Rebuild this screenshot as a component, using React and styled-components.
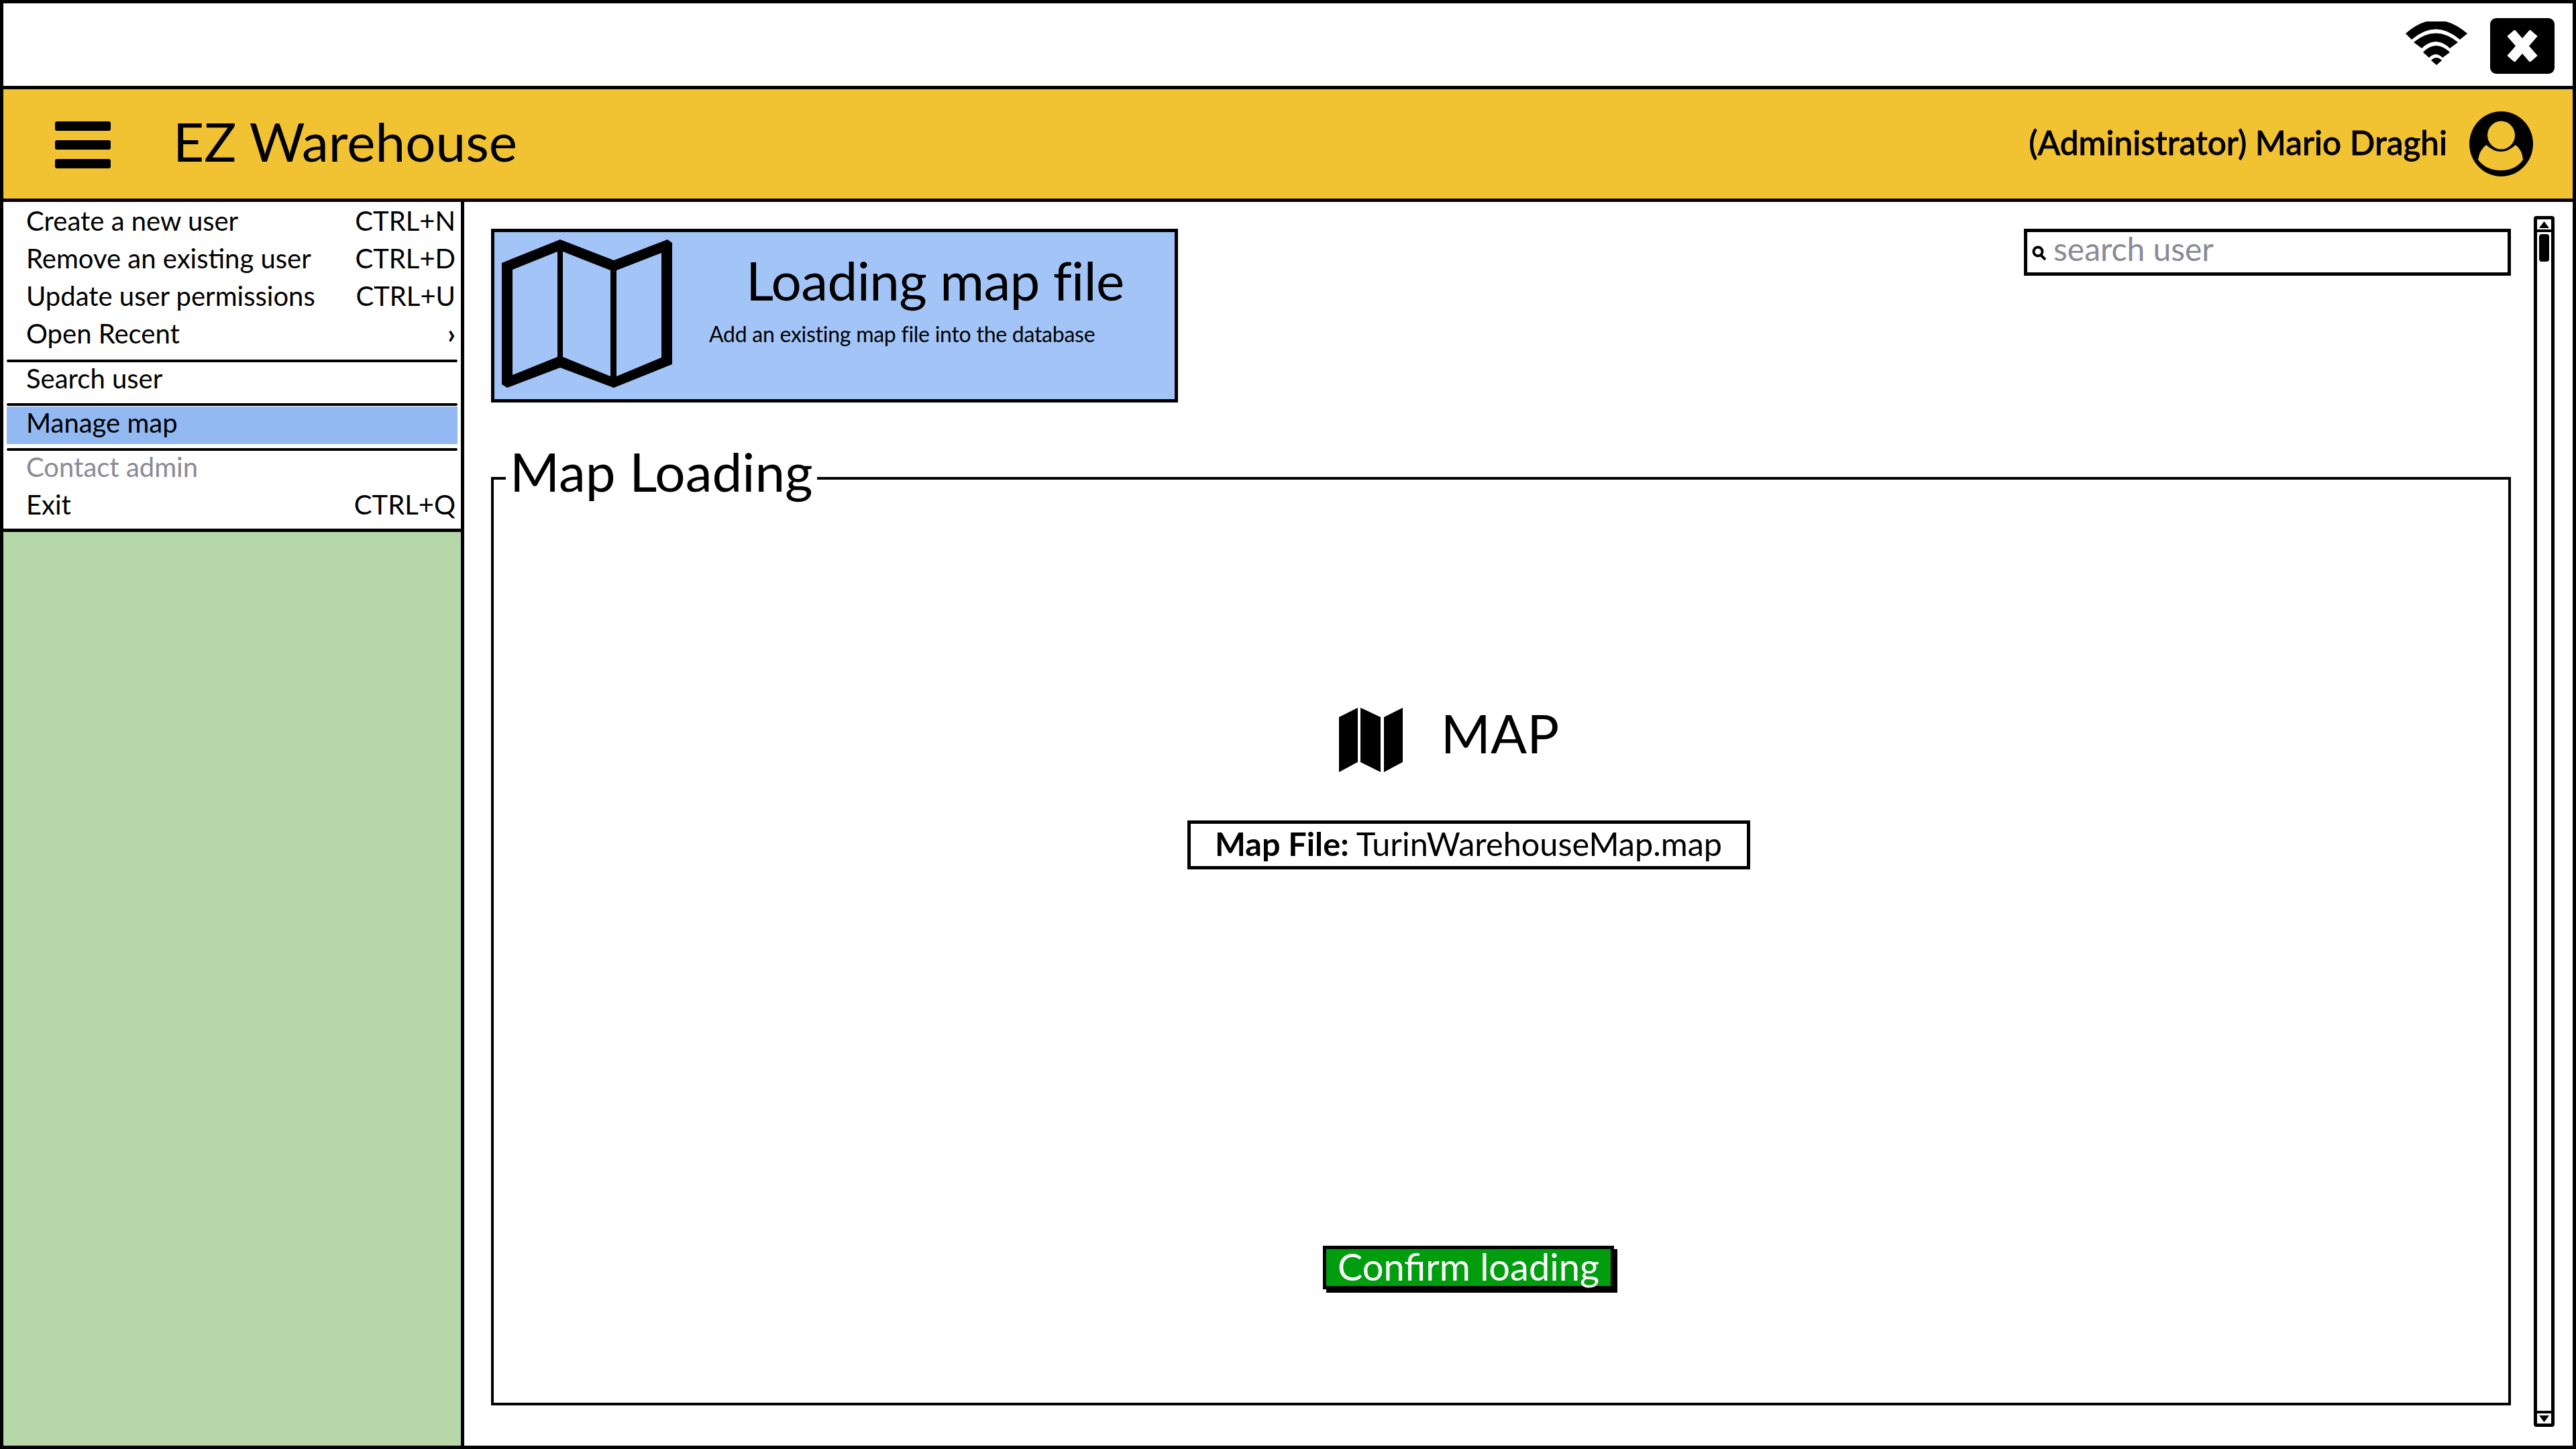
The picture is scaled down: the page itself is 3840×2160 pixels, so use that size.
import React from "react";
import styled, { createGlobalStyle } from "styled-components";

const Global = createGlobalStyle`
  html, body { margin: 0; padding: 0; background: #fff; }
  body { font-family: Lato, "Open Sans", sans-serif; color: #000; }
  * { box-sizing: border-box; }
`;

const Frame = styled.div`
  width: 3840px;
  height: 2160px;
  border: 5px solid #000;
  display: flex;
  flex-direction: column;
  overflow: hidden;
  background: #fff;
`;

const TitleBar = styled.div`
  height: 128px;
  flex: none;
  border-bottom: 5px solid #000;
  display: flex;
  align-items: center;
  justify-content: flex-end;
  gap: 34px;
  padding-right: 27px;
`;

const WifiIcon = styled.svg`
  width: 92px;
  height: 65px;
  margin-bottom: 4px;
`;

const CloseButton = styled.div`
  width: 96px;
  height: 83px;
  margin-top: 4px;
  background: #000;
  border-radius: 9px;
  display: flex;
  align-items: center;
  justify-content: center;
`;

const Header = styled.header`
  height: 168px;
  flex: none;
  background: #f1c232;
  border-bottom: 5px solid #000;
  display: flex;
  align-items: center;
  padding: 0 59px 0 77px;
`;

const Burger = styled.div`
  width: 83px;
  display: flex;
  flex-direction: column;
  gap: 14px;
  margin-top: 3px;
`;

const BurgerBar = styled.span`
  height: 14px;
  background: #000;
  border-radius: 3px;
`;

const AppTitle = styled.h1`
  margin: 0 0 10px 93px;
  font-size: 80px;
  font-weight: 400;
  line-height: 96px;
  flex: 1;
`;

const UserName = styled.span`
  font-size: 49.5px;
  font-weight: 500;
  -webkit-text-stroke: 0.8px #000;
  margin: 0 33px 6px 0;
`;

const Avatar = styled.svg`
  width: 95px;
  height: 97px;
`;

const Body = styled.div`
  flex: 1;
  min-height: 0;
  display: flex;
`;

const Sidebar = styled.aside`
  width: 687px;
  flex: none;
  border-right: 5px solid #000;
  display: flex;
  flex-direction: column;
`;

const Menu = styled.nav`
  background: #fff;
  border-bottom: 5px solid #000;
  padding-bottom: 8px;
  font-size: 40px;
`;

const MenuRow = styled.div`
  margin: 0 5px;
  padding: 0 3px 0 29px;
  height: 56px;
  line-height: ${(p) => (p.$active ? "48px" : "56px")};
  display: flex;
  justify-content: space-between;
  background: ${(p) => (p.$active ? "#93b9f2" : "transparent")};
  color: ${(p) => (p.$muted ? "#8a8a96" : "#000")};
`;

const SubmenuMark = styled.span`
  font-weight: 700;
`;

const MenuSep = styled.div`
  height: 4px;
  margin: ${(p) => p.$top}px 5px ${(p) => p.$bottom}px;
  background: #000;
  border-radius: 2px;
`;

const GreenFill = styled.div`
  flex: 1;
  background: #b6d7a8;
`;

const Main = styled.main`
  flex: 1;
  min-width: 0;
  display: flex;
  padding: 0 27px 0 40px;
`;

const Content = styled.div`
  width: 3011px;
  flex: none;
  padding-top: 40px;
`;

const TopRow = styled.div`
  display: flex;
  justify-content: space-between;
  align-items: flex-start;
`;

const Card = styled.section`
  width: 1024px;
  height: 259px;
  background: #a2c4f7;
  border: 5px solid #000;
  display: flex;
  padding: 11px 0 0 11px;
`;

const CardIcon = styled.svg`
  width: 254px;
  height: 221px;
  flex: none;
`;

const CardText = styled.div`
  margin-left: 55px;
  padding-top: 12px;
`;

const CardTitle = styled.h2`
  margin: 0 0 0 55px;
  font-size: 80px;
  font-weight: 400;
  line-height: 96px;
  letter-spacing: -0.6px;
`;

const CardSub = styled.p`
  margin: 13px 0 0;
  font-size: 32px;
  line-height: 40px;
  letter-spacing: -0.26px;
`;

const SearchBox = styled.div`
  width: 726px;
  height: 70px;
  border: 5px solid #000;
  display: flex;
  align-items: center;
  padding: 0 0 10px 7px;
  gap: 10px;
  font-size: 48px;
  color: #8a8a96;
  line-height: 60px;
`;

const SearchIcon = styled.svg`
  width: 22px;
  height: 22px;
  margin-top: 12px;
`;

const Group = styled.fieldset`
  margin: 54px 0 0;
  padding: 283px 97px 0 0;
  height: 1441px;
  border: 4px solid #000;
  min-width: 0;
`;

const GroupTitle = styled.legend`
  margin-left: 18px;
  padding: 0 6px 22px;
  font-size: 80px;
  line-height: 96px;
`;

const GroupBody = styled.div`
  display: flex;
  flex-direction: column;
  align-items: center;
`;

const MapRow = styled.div`
  display: flex;
  align-items: flex-start;
  gap: 57px;
  margin-right: 58px;
`;

const MapIcon = styled.svg`
  width: 95px;
  height: 96px;
`;

const MapLabel = styled.span`
  font-size: 80px;
  line-height: 74px;
`;

const FileBox = styled.div`
  margin-top: 72px;
  width: 839px;
  height: 73px;
  border: 5px solid #000;
  padding-bottom: 6px;
  display: flex;
  align-items: center;
  justify-content: center;
  font-size: 48.6px;
  line-height: 58px;
`;

const FileLabel = styled.b`
  font-weight: 700;
  margin-right: 11px;
`;

const ConfirmButton = styled.button`
  margin-top: 561px;
  width: 434px;
  height: 65px;
  padding: 0;
  border: 5px solid #000;
  box-shadow: 5px 5px 0 #000;
  background: #009e0f;
  color: #fff;
  font-family: inherit;
  font-size: 56px;
  display: block;
  align-self: center;
  overflow: visible;
  text-align: center;
`;

const ConfirmText = styled.span`
  display: block;
  height: 45px;
  line-height: 45px;
  margin-bottom: 4px;
`;

const Scrollbar = styled.div`
  width: 31px;
  flex: none;
  margin: 21px 0 28px 34px;
  border: 5px solid #000;
  border-radius: 4px;
  display: flex;
  flex-direction: column;
`;

const ScrollButton = styled.div`
  height: 19px;
  flex: none;
  display: flex;
  align-items: center;
  justify-content: center;
  ${(p) => (p.$up ? "border-bottom: 4px solid #000;" : "border-top: 4px solid #000;")}
`;

const ScrollTrack = styled.div`
  flex: 1;
  padding: 3px 0 0 3px;
`;

const ScrollThumb = styled.div`
  width: 15px;
  height: 41px;
  background: #000;
  border-radius: 4px;
`;

const ArrowIcon = styled.svg`
  width: 15px;
  height: 10px;
`;

const menuTop = [
  ["Create a new user", "CTRL+N"],
  ["Remove an existing user", "CTRL+D"],
  ["Update user permissions", "CTRL+U"],
];

export default function App() {
  return (
    <Frame>
      <Global />
      <TitleBar>
        <WifiIcon viewBox="3586 32 92 65">
          <path d="M3586 50 Q3631 10 3678 50 L3667 59 Q3631 28 3595 59 Z" fill="#000" />
          <path d="M3598 63 Q3631 36 3664 63 L3652 72 Q3631 52 3610 72 Z" fill="#000" />
          <path d="M3612 78 Q3631 58 3652 78 L3641 86 Q3631 76 3621 86 Z" fill="#000" />
          <path d="M3624 90 Q3632 82 3640 90 L3632 97 Z" fill="#000" />
        </WifiIcon>
        <CloseButton>
          <svg width="48" height="47" viewBox="0 0 48 47">
            <path d="M7 4 L41 43 M41 4 L7 43" stroke="#fff" strokeWidth="15" fill="none" />
          </svg>
        </CloseButton>
      </TitleBar>
      <Header>
        <Burger>
          <BurgerBar />
          <BurgerBar />
          <BurgerBar />
        </Burger>
        <AppTitle>EZ Warehouse</AppTitle>
        <UserName>(Administrator) Mario Draghi</UserName>
        <Avatar viewBox="3681 168 95 97">
          <ellipse cx="3728.5" cy="216.5" rx="47.5" ry="48.5" fill="#000" />
          <path d="M3694 240 Q3696 226 3706 218 Q3728 238 3750 218 Q3760 226 3761 240 Q3750 256 3728 256 Q3706 256 3694 240 Z" fill="#f1c232" />
          <ellipse cx="3728.5" cy="203.5" rx="20.5" ry="21" fill="#f1c232" />
        </Avatar>
      </Header>
      <Body>
        <Sidebar>
          <Menu>
            {menuTop.map(([label, key]) => (
              <MenuRow key={label}>
                <span>{label}</span>
                <span>{key}</span>
              </MenuRow>
            ))}
            <MenuRow>
              <span>Open Recent</span>
              <SubmenuMark>›</SubmenuMark>
            </MenuRow>
            <MenuSep $top={11} $bottom={-4} />
            <MenuRow>Search user</MenuRow>
            <MenuSep $top={9} $bottom={1} />
            <MenuRow $active>Manage map</MenuRow>
            <MenuSep $top={6} $bottom={-4} />
            <MenuRow $muted>Contact admin</MenuRow>
            <MenuRow>
              <span>Exit</span>
              <span>CTRL+Q</span>
            </MenuRow>
          </Menu>
          <GreenFill />
        </Sidebar>
        <Main>
          <Content>
            <TopRow>
              <Card>
                <CardIcon viewBox="748 357 254 221">
                  <path
                    fillRule="evenodd"
                    d="M748 392 L835 357 L915 388 L995 357 L1002 362 L1002 543 L915 578 L835 548 L756 578 L748 573 Z M764 402 L831 375 L831 532 L764 559 Z M839 375 L910 403 L910 561 L839 532 Z M919 403 L986 377 L986 533 L919 561 Z"
                    fill="#000"
                  />
                </CardIcon>
                <CardText>
                  <CardTitle>Loading map file</CardTitle>
                  <CardSub>Add an existing map file into the database</CardSub>
                </CardText>
              </Card>
              <SearchBox>
                <SearchIcon viewBox="0 0 22 22">
                  <circle cx="9" cy="9" r="6.5" fill="none" stroke="#000" strokeWidth="4" />
                  <path d="M13 14 L20 21" stroke="#000" strokeWidth="4" />
                </SearchIcon>
                search user
              </SearchBox>
            </TopRow>
            <Group>
              <GroupTitle>Map Loading</GroupTitle>
              <GroupBody>
                <MapRow>
                  <MapIcon viewBox="1997 1055 95 96">
                    <path d="M1997 1069 L2025 1055 L2025 1136 L1997 1151 Z M2029 1055 L2059 1069 L2059 1151 L2029 1136 Z M2064 1069 L2092 1055 L2092 1136 L2064 1151 Z" fill="#000" />
                  </MapIcon>
                  <MapLabel>MAP</MapLabel>
                </MapRow>
                <FileBox>
                  <FileLabel>Map File:</FileLabel>
                  TurinWarehouseMap.map
                </FileBox>
                <ConfirmButton>
                  <ConfirmText>Confirm loading</ConfirmText>
                </ConfirmButton>
              </GroupBody>
            </Group>
          </Content>
          <Scrollbar>
            <ScrollButton $up>
              <ArrowIcon viewBox="0 0 15 10">
                <path d="M7.5 0 L15 10 L0 10 Z" fill="#000" />
              </ArrowIcon>
            </ScrollButton>
            <ScrollTrack>
              <ScrollThumb />
            </ScrollTrack>
            <ScrollButton>
              <ArrowIcon viewBox="0 0 15 10">
                <path d="M0 0 L15 0 L7.5 10 Z" fill="#000" />
              </ArrowIcon>
            </ScrollButton>
          </Scrollbar>
        </Main>
      </Body>
    </Frame>
  );
}
